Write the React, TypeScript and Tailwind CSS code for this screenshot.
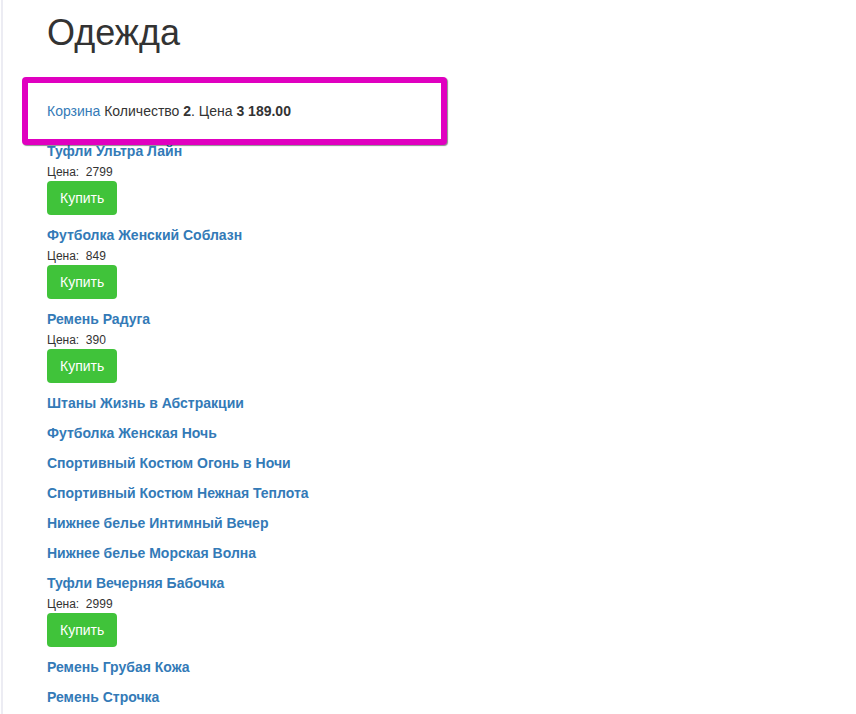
const products = [
  { name: "Туфли Ультра Лайн", price: 2799 },
  { name: "Футболка Женский Соблазн", price: 849 },
  { name: "Ремень Радуга", price: 390 },
  { name: "Штаны Жизнь в Абстракции" },
  { name: "Футболка Женская Ночь" },
  { name: "Спортивный Костюм Огонь в Ночи" },
  { name: "Спортивный Костюм Нежная Теплота" },
  { name: "Нижнее белье Интимный Вечер" },
  { name: "Нижнее белье Морская Волна" },
  { name: "Туфли Вечерняя Бабочка", price: 2999 },
  { name: "Ремень Грубая Кожа" },
  { name: "Ремень Строчка" },
];

type Product = { name: string; price?: number };

const ProductItem = ({ item }: { item: Product }) => (
  <div className="mb-[10px]">
    <a href="#" className="block text-[14px] leading-[20px] font-bold text-[#337ab7]">
      {item.name}
    </a>
    {item.price !== undefined && (
      <>
        <div className="mt-[3px] text-[12px] leading-[17px] text-[#333]">
          Цена:&nbsp;&nbsp;{item.price}
        </div>
        <button className="block h-[34px] px-[13px] rounded-[4px] bg-[#40c33a] text-white text-[14px] leading-[20px]">
          Купить
        </button>
      </>
    )}
  </div>
);

const App = () => {
  return (
    <div
      className="min-h-screen bg-white text-[#333]"
      style={{ fontFamily: '"Liberation Sans", Arial, sans-serif' }}
    >
      <div className="ml-px min-h-screen border-l-2 border-[#ececf3] pl-[44px]">
        <h1 className="pt-[13px] text-[36px] leading-[40px] font-normal text-[#333]">Одежда</h1>

        <div className="relative z-10 mt-[24px] -mb-[4px] -ml-[25px] w-[425px] h-[68px] rounded-[4px] border-[6px] border-[#e000c0] bg-white shadow-[1px_1px_1px_rgba(0,0,0,0.45)] pl-[19px] pt-[18px] text-[14px] leading-[20px]">
          <a href="#" className="text-[#337ab7]">Корзина</a> Количество <b>2</b>. Цена <b>3 189.00</b>
        </div>

        <div>
          {products.map((p) => (
            <ProductItem key={p.name} item={p} />
          ))}
        </div>
      </div>
    </div>
  );
};

export default App;
